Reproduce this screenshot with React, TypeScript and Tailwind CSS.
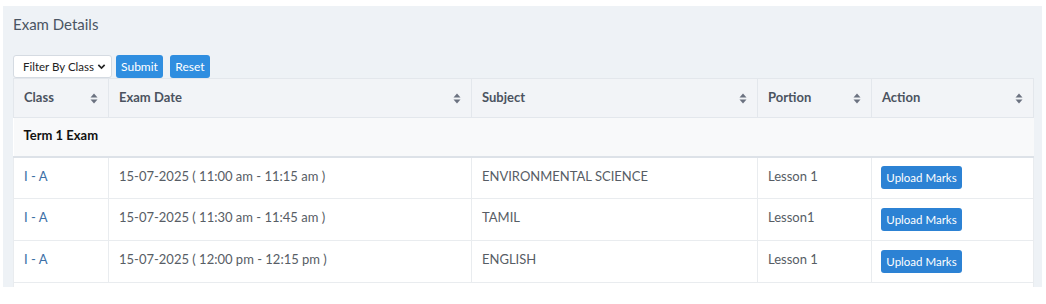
import React from 'react';

type ExamRow = {
  cls: string;
  date: string;
  subject: string;
  portion: string;
};

const ROWS: ExamRow[] = [
  { cls: 'I - A', date: '15-07-2025 ( 11:00 am - 11:15 am )', subject: 'ENVIRONMENTAL SCIENCE', portion: 'Lesson 1' },
  { cls: 'I - A', date: '15-07-2025 ( 11:30 am - 11:45 am )', subject: 'TAMIL', portion: 'Lesson1' },
  { cls: 'I - A', date: '15-07-2025 ( 12:00 pm - 12:15 pm )', subject: 'ENGLISH', portion: 'Lesson 1' },
];

const COLUMNS = [
  { label: 'Class', width: 'w-[95px]' },
  { label: 'Exam Date', width: 'w-[363px]' },
  { label: 'Subject', width: 'w-[286px]' },
  { label: 'Portion', width: 'w-[114px]' },
  { label: 'Action', width: 'w-[162px]' },
];

const SortIcon = () => (
  <svg width="8" height="11" viewBox="0 0 8 11" className="shrink-0">
    <path d="M4 0.5 L7.5 4.5 H0.5 Z" fill="#6b7280" />
    <path d="M4 10.5 L7.5 6.5 H0.5 Z" fill="#6b7280" />
  </svg>
);

const App: React.FC = () => {
  return (
    <div className="h-[304px] w-[1046px] bg-white font-['Lato','Open_Sans',sans-serif]">
      <div className="ml-[3px] mt-[6px] h-[281px] w-[1039px] overflow-hidden bg-[#eef2f6] pl-[10px] pr-[9px] pt-[8px]">
        <h1 className="h-[20px] text-[15px] leading-[20px] text-[#4a5563]">Exam Details</h1>

        <div className="mt-[21px] flex h-[23px] items-center gap-[4px]">
          <div className="flex h-[23px] w-[99px] items-center justify-between whitespace-nowrap rounded-[3px] border border-[#d5dbe2] bg-white pl-[9px] pr-[5px] text-[11.5px] text-[#222]">
            <span>Filter By Class</span>
            <svg width="9" height="9" viewBox="0 0 10 10">
              <path d="M1.5 3.2 L5 6.8 L8.5 3.2" stroke="#222" strokeWidth="1.8" fill="none" />
            </svg>
          </div>
          <button className="h-[23px] w-[47px] rounded-[3px] bg-[#2f8ee0] text-[12px] text-white">Submit</button>
          <button className="ml-[3px] h-[23px] w-[40px] rounded-[3px] bg-[#2f8ee0] text-[12px] text-white">Reset</button>
        </div>

        <table className="w-[1020px] table-fixed border-collapse bg-white text-[13px]">
          <thead>
            <tr className="h-[39px] bg-[#f2f4f7]">
              {COLUMNS.map(col => (
                <th key={col.label} className={`${col.width} border border-[#e3e7ec] px-[10px] text-left font-bold text-[#4b5360]`}>
                  <div className="flex items-center justify-between">
                    <span>{col.label}</span>
                    <SortIcon />
                  </div>
                </th>
              ))}
            </tr>
          </thead>
          <tbody>
            <tr className="h-[39px] border-b-2 border-[#dde2e8] bg-[#f8f9fa]">
              <td colSpan={5} className="px-[10px] pb-[3px] font-bold text-[#111]">Term 1 Exam</td>
            </tr>
            {ROWS.map((row, i) => (
              <tr key={i} className="h-[42px] text-[#575d65]">
                <td className="border border-[#e9ecef] px-[10px] pb-[3px] text-[#3b6fa6]">{row.cls}</td>
                <td className="border border-[#e9ecef] px-[10px] pb-[3px]">{row.date}</td>
                <td className="border border-[#e9ecef] px-[10px] pb-[3px]">{row.subject}</td>
                <td className="border border-[#e9ecef] px-[10px] pb-[3px]">{row.portion}</td>
                <td className="border border-[#e9ecef] px-[9px]">
                  <button className="h-[23px] w-[81px] rounded-[3px] bg-[#2c82d4] text-[11.5px] text-white">Upload Marks</button>
                </td>
              </tr>
            ))}
            <tr className="h-[42px]">
              <td colSpan={5} className="border border-[#e9ecef]"></td>
            </tr>
          </tbody>
        </table>
      </div>
    </div>
  );
};

export default App;
